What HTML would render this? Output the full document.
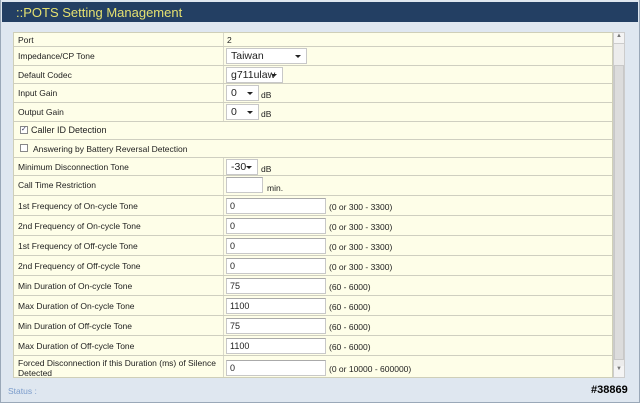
<!DOCTYPE html><html><head><style>
*{box-sizing:border-box;margin:0;padding:0}
body{width:640px;height:403px;background:#dfe7f0;font-family:"Liberation Sans",Arial,sans-serif;font-size:8.5px;color:#222;position:relative;overflow:hidden}
.frame{position:absolute;left:0;top:0;width:640px;height:403px;border:1px solid #9aa8b8;border-top:none}
.hd{position:absolute;left:2px;top:2px;width:636px;height:20px;background:#233f63;color:#e4e070;font-size:13px;padding:3px 0 0 14px}
.tb{position:absolute;left:13px;top:32px;width:600px;height:346px;background:#fefee8;border:1px solid #cfcfb8;overflow:hidden}
.r{position:absolute;left:0;width:600px;border-bottom:1px solid #cfcfc0}
.l{position:absolute;left:4px}
.v{position:absolute;left:209px;top:0;bottom:0;border-left:1px solid #d8d8c8}
.in{position:absolute;background:#fff;border:1px solid #c8c8c8;border-top-color:#aaa;height:16px;font-size:9px;padding:2px 3px}
.sel{position:absolute;background:#fff;border:1px solid #c8c8c8;height:16px;font-size:10.5px;padding:1px 4px;overflow:hidden;white-space:nowrap}
.sel:after{content:"";position:absolute;right:5px;top:6px;border:3px solid transparent;border-top:3px solid #222}
.u{position:absolute}
.sb{position:absolute;left:613px;top:32px;width:12px;height:346px;background:#ececec;border:1px solid #ccc}
</style></head><body>
<div class="frame"></div>
<div class="hd">::POTS Setting Management</div>
<div class="tb">
<div class="r" style="top:0;height:14px"><span class="l" style="top:2px">Port</span><div class="v"></div><span class="u" style="left:213px;top:2px">2</span></div>
<div class="r" style="top:14px;height:19px"><span class="l" style="top:4px">Impedance/CP Tone</span><div class="v"></div><div class="sel" style="left:212px;top:1px;width:81px">Taiwan</div></div>
<div class="r" style="top:33px;height:18px"><span class="l" style="top:4px">Default Codec</span><div class="v"></div><div class="sel" style="left:212px;top:1px;width:57px;padding-right:14px">g711ulaw</div></div>
<div class="r" style="top:51px;height:19px"><span class="l" style="top:4px">Input Gain</span><div class="v"></div><div class="sel" style="left:212px;top:1px;width:33px">0</div><span class="u" style="left:247px;top:6px">dB</span></div>
<div class="r" style="top:70px;height:19px"><span class="l" style="top:4px">Output Gain</span><div class="v"></div><div class="sel" style="left:212px;top:1px;width:33px">0</div><span class="u" style="left:247px;top:6px">dB</span></div>
<div class="r" style="top:89px;height:18px"><span class="u" style="left:6px;top:4px;width:8px;height:8px;border:1px solid #888;background:#fff;font-size:7px;line-height:6px;color:#335">✓</span><span class="l" style="left:17px;top:3px;font-size:9px">Caller ID Detection</span></div>
<div class="r" style="top:107px;height:18px"><span class="u" style="left:6px;top:4px;width:8px;height:8px;border:1px solid #888;background:#fff"></span><span class="l" style="left:19px;top:4px">Answering by Battery Reversal Detection</span></div>
<div class="r" style="top:125px;height:18px"><span class="l" style="top:4px">Minimum Disconnection Tone</span><div class="v"></div><div class="sel" style="left:212px;top:1px;width:32px">-30</div><span class="u" style="left:247px;top:6px">dB</span></div>
<div class="r" style="top:143px;height:20px"><span class="l" style="top:4px">Call Time Restriction</span><div class="v"></div><div class="in" style="left:212px;top:1px;width:37px"></div><span class="u" style="left:253px;top:7px">min.</span></div>
<div class="r" style="top:163px;height:20px"><span class="l" style="top:5px">1st Frequency of On-cycle Tone</span><div class="v"></div><div class="in" style="left:212px;top:2px;width:100px">0</div><span class="u" style="left:315px;top:6px">(0 or 300 - 3300)</span></div>
<div class="r" style="top:183px;height:20px"><span class="l" style="top:5px">2nd Frequency of On-cycle Tone</span><div class="v"></div><div class="in" style="left:212px;top:2px;width:100px">0</div><span class="u" style="left:315px;top:6px">(0 or 300 - 3300)</span></div>
<div class="r" style="top:203px;height:20px"><span class="l" style="top:5px">1st Frequency of Off-cycle Tone</span><div class="v"></div><div class="in" style="left:212px;top:2px;width:100px">0</div><span class="u" style="left:315px;top:6px">(0 or 300 - 3300)</span></div>
<div class="r" style="top:223px;height:20px"><span class="l" style="top:5px">2nd Frequency of Off-cycle Tone</span><div class="v"></div><div class="in" style="left:212px;top:2px;width:100px">0</div><span class="u" style="left:315px;top:6px">(0 or 300 - 3300)</span></div>
<div class="r" style="top:243px;height:20px"><span class="l" style="top:5px">Min Duration of On-cycle Tone</span><div class="v"></div><div class="in" style="left:212px;top:2px;width:100px">75</div><span class="u" style="left:315px;top:6px">(60 - 6000)</span></div>
<div class="r" style="top:263px;height:20px"><span class="l" style="top:5px">Max Duration of On-cycle Tone</span><div class="v"></div><div class="in" style="left:212px;top:2px;width:100px">1100</div><span class="u" style="left:315px;top:6px">(60 - 6000)</span></div>
<div class="r" style="top:283px;height:20px"><span class="l" style="top:5px">Min Duration of Off-cycle Tone</span><div class="v"></div><div class="in" style="left:212px;top:2px;width:100px">75</div><span class="u" style="left:315px;top:6px">(60 - 6000)</span></div>
<div class="r" style="top:303px;height:20px"><span class="l" style="top:5px">Max Duration of Off-cycle Tone</span><div class="v"></div><div class="in" style="left:212px;top:2px;width:100px">1100</div><span class="u" style="left:315px;top:6px">(60 - 6000)</span></div>
<div class="r" style="top:323px;height:24px;border:none"><span class="l" style="top:2px;line-height:10px">Forced Disconnection if this Duration (ms) of Silence<br>Detected</span><div class="v"></div><div class="in" style="left:212px;top:4px;width:100px">0</div><span class="u" style="left:315px;top:8px">(0 or 10000 - 600000)</span></div>
</div>
<div class="sb"><div style="position:absolute;left:0;top:0;width:10px;height:11px;border-bottom:1px solid #ccc;background:#f4f4f4;font-size:6px;color:#777;text-align:center">▲</div><div style="position:absolute;left:0;top:32px;width:10px;height:295px;background:#dcdcdc;border:1px solid #c8c8c8"></div><div style="position:absolute;left:0;bottom:0;width:10px;height:11px;background:#f4f4f4;font-size:6px;color:#777;text-align:center">▼</div></div>
<div style="position:absolute;left:8px;top:386px;color:#7b9ccb;font-size:8.5px">Status :</div>
<div style="position:absolute;left:591px;top:384px;font-size:11px;font-weight:bold;color:#000">#38869</div>
</body></html>
